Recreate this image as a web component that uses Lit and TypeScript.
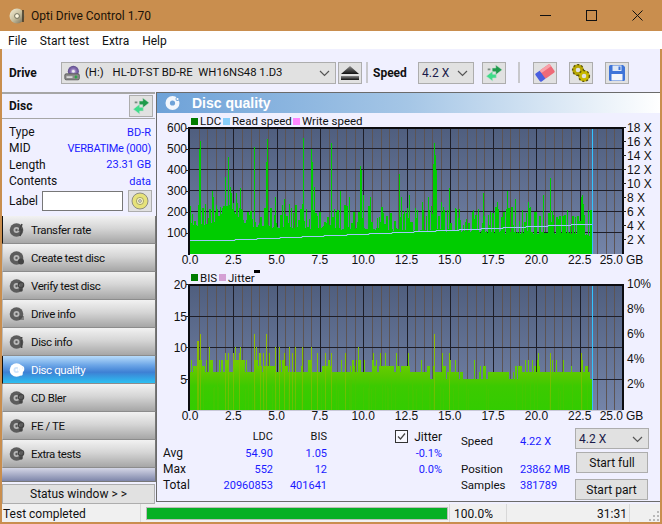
import { LitElement, html, css, svg } from "lit";
import { customElement } from "lit/decorators.js";

function rng(seed: number) {
  return () => {
    seed |= 0; seed = (seed + 0x6d2b79f5) | 0;
    let t = Math.imul(seed ^ (seed >>> 15), 1 | seed);
    t = (t + Math.imul(t ^ (t >>> 7), 61 | t)) ^ t;
    return ((t ^ (t >>> 14)) >>> 0) / 4294967296;
  };
}

const X0 = 33, PLOT_R = 466; // svg-local x (svg starts at page x=157)
const PXGB = (PLOT_R - X0) / 25;

const ldcPeaks: [number, number][] = [[190,230],[199,500],[200,540],[205,240],[212,300],[213,270],[225,365],[228,460],[230,320],[231,290],[236,290],[240,315],[254,510],[266,440],[267,550],[275,270],[284,260],[289,240],[303,552],[311,500],[312,440],[314,320],[331,530],[340,300],[349,270],[360,420],[361,400],[363,280],[370,270],[399,380],[401,270],[409,280],[407,220],[415,220],[417,210],[422,250],[428,270],[431,230],[433,430],[434,528],[435,470],[436,400],[441,250],[444,210],[447,210],[449,314],[455,220],[459,215],[473,210],[483,290],[490,200],[497,250],[507,300],[515,260],[522,210],[528,250],[543,280],[550,360],[567,210],[581,270],[582,280],[583,240],[588,210],[590,210]];
const bisPeaks: [number, number][] = [[197,11],[198,11],[200,12],[225,9],[228,9],[233,9],[239,9],[254,12],[260,9],[263,9],[266,12],[275,10],[279,10],[284,9],[289,10],[292,9],[295,10],[302,10],[311,10],[317,9],[325,9],[331,9],[345,9],[360,8],[434,12],[449,9],[474,8],[528,8],[550,9],[581,9],[582,8]];

function ldcPath() {
  const r = rng(11);
  const peaks = new Map(ldcPeaks);
  let d = "";
  let carry = 0, carryLeft = 0;
  for (let px = 190; px < 593; px++) {
    const t = (px - 190) / 403;
    let v = 140 - 46 * t + r() * 14 - 7;
    if (carryLeft > 0) { v = carry; carryLeft--; }
    else if (r() < 0.58 - 0.18 * t) {
      v = 140 + r() * (110 - 30 * t);
      carry = v; carryLeft = r() < 0.5 ? 1 : 0;
    }
    v += 90 * Math.exp(-(((px - 228) / 11) ** 2));
    if (peaks.has(px)) v = peaks.get(px)!;
    const y = 141 - v * 0.21;
    d += `M${px - 157} ${y.toFixed(1)}h1V141h-1z`;
  }
  return d;
}

function bisPaths() {
  const r = rng(5);
  const peaks = new Map(bisPeaks);
  let d = "", o = "", s = "";
  let cur = 6;
  for (let px = 190; px < 593; px++) {
    const t = (px - 190) / 403;
    if (r() < 0.32) {
      const q = r();
      cur = t < 0.5 ? (q < 0.45 ? 6 : q < 0.8 ? 7 : 8) : (q < 0.2 ? 5 : q < 0.75 ? 6 : 7);
    }
    let v = cur;
    if (r() < 0.09) v = cur + 2;
    const p = peaks.get(px);
    if (p) v = p;
    const y = 140 - v * 6.3;
    const seg = `M${px - 157} ${y.toFixed(1)}h1V140h-1z`;
    if (p && p >= 9) o += seg; else d += seg;
    if (r() < 0.18) s += `M${px - 157} ${(140 - (3 + r() * 2) * 6.3).toFixed(1)}h1V140h-1z`;
  }
  return { d, o, s };
}
const LDC = ldcPath();
const BIS = bisPaths();
const SPEED = (() => {
  let d = "M33 127.5";
  const steps = 18;
  for (let i = 1; i <= steps; i++) {
    const x = 33 + (403 * i) / steps;
    const y = 127.5 - i * (17 / steps);
    d += `H${x.toFixed(0)}V${(Math.round(y) + 0.5).toFixed(1)}`;
  }
  return d;
})();

function disc(active = false, glyph = "") {
  const c = active ? "#fff" : "#5c5c5c";
  const c2 = active ? "#cfe4fb" : "#b8b8b8";
  const g = active ? "#fff" : "#444";
  return svg`<svg class="bi" width="17" height="16" viewBox="0 0 17 16">
    <circle cx="7.5" cy="8" r="6.8" fill=${c}/>
    <circle cx="7.5" cy="8" r="3" fill=${c2}/>
    <circle cx="7.5" cy="8" r="1.2" fill=${c}/>
    ${glyph === "bolt" ? svg`<path d="M13 2 L10.5 8 L13 7.5 L11 14" fill="none" stroke=${g} stroke-width="1.6"/>` : ""}
    ${glyph === "dot" ? svg`<circle cx="12" cy="11.5" r="3" fill=${g}/>` : ""}
    ${glyph === "ring" ? svg`<circle cx="12" cy="7" r="2.6" fill="none" stroke=${g} stroke-width="1.4"/><circle cx="12" cy="12" r="1.8" fill=${g}/>` : ""}
    ${glyph === "lines" ? svg`<path d="M10 11h5M10 13h5" stroke=${g} stroke-width="1.2"/>` : ""}
    ${glyph === "i" ? svg`<path d="M12.5 3v1.6M12.5 6v8" stroke=${g} stroke-width="1.8"/>` : ""}
  </svg>`;
}

function refresh(size = 20) {
  return svg`<svg width=${size} height=${size} viewBox="0 0 20 20">
    <path d="M8 4.5H12V1L19 6.5L12 12V8.500H8Z" fill="#1f9a4c" stroke="#c4dccc" stroke-width=".6"/>
    <path d="M12.500 15.500H8.500V19L1.500 13.500L8.500 8V11.500H12.500Z" fill="#3fdc8a" stroke="#c4dccc" stroke-width=".6"/>
    <rect x="3" y="5" width="3" height="2" fill="#7a8a80"/>
  </svg>`;
}

function chevron() {
  return svg`<svg class="chev" width="11" height="7" viewBox="0 0 11 7"><path d="M1 1 L5.5 5.5 L10 1" fill="none" stroke="#555" stroke-width="1.2"/></svg>`;
}

@customElement("app-root")
export class AppRoot extends LitElement {
  static styles = css`
    :host { display: block; width: 662px; height: 524px; overflow: hidden; font: 12px Roboto, "Noto Sans", sans-serif; color: #111; }
    * { box-sizing: border-box; }
    .win { height: 524px; background: #c98e4e; padding: 0 2px 2px; display: flex; flex-direction: column; }
    .title { height: 31px; display: flex; align-items: center; margin: 0 -2px; padding: 0 2px 0 9px; flex: none; }
    .title .t { margin-left: 4px; font-size: 12px; color: #1a1208; }
    .wc { margin-left: auto; display: flex; }
    .wc span { width: 46px; height: 31px; display: flex; align-items: center; justify-content: center; }
    .menu { height: 18px; background: #fff; display: flex; gap: 13px; align-items: center; flex: none; font-size: 12px; margin: 0 -2px; padding: 1px 0 0 8px; }
    .toolbar { height: 43px; background: #f0f0ff; flex: none; display: flex; align-items: center; padding: 4px 0 0 7px; }
    .toolbar b { font-weight: 700; font-size: 12px; flex: none; }
    .b1 { width: 25px; }
    .b2 { width: 32px; margin-left: 5px; }
    .combo { height: 22px; background: #e1e1e1; border: 1px solid #adadad; display: flex; align-items: center; position: relative; padding-left: 3px; color: #1a1a4a; }
    .combo .chev { position: absolute; right: 5px; top: 7px; }
    .drive { width: 275px; margin-left: 27px; gap: 4px; color: #111; font-size: 11.3px; padding-left: 2px; }
    .dv { margin-left: 5px; }
    .speedc { width: 56px; margin-left: 13px; }
    .tb { width: 24px; height: 22px; background: #e1e1e1; border: 1px solid #adadad; display: flex; align-items: center; justify-content: center; flex: none; }
    .ej { margin-left: 2px; }
    .m8 { margin-left: 8px; }
    .m12 { margin-left: 12px; }
    .m13 { margin-left: 13px; }
    .m4 { margin-left: 4px; }
    .sep { width: 2px; height: 21px; background: #c8c8cc; flex: none; }
    .main { height: 412px; flex: none; display: flex; background: #f0f0ff; }
    .side { width: 154px; flex: none; display: flex; flex-direction: column; }
    .dischead { height: 27px; border-top: 2px solid #a6a6a6; border-bottom: 1px solid #a6a6a6; display: flex; align-items: center; justify-content: space-between; padding: 0 2px 0 7px; margin-right: 1px; }
    .dischead b { font-size: 12px; }
    .info { height: 97px; padding: 5px 5px 0 7px; }
    .info .r { height: 16.3px; display: flex; justify-content: space-between; align-items: center; }
    .blue { color: #1a1aff; font-size: 11px; }
    .mid { letter-spacing: -.25px; }
    .lab { display: flex; align-items: center; height: 22px; margin-top: 1px; }
    .lab span { width: 33px; flex: none; }
    .lab input { width: 81px; height: 20px; border: 1px solid #777; background: #fff; padding: 0; flex: none; }
    .lab .tb { margin-left: 5px; height: 22px; }
    .btn { height: 28px; flex: none; display: flex; align-items: center; gap: 5px; padding-left: 6px; background: linear-gradient(#f2f2f2, #d6d6d6 45%, #a6a6a6); border-bottom: 1px solid #8c8c8c; border-right: 1px solid #777; border-left: 1px solid #bbb; font-size: 11.5px; letter-spacing: -.4px; color: #111; }
    .btn.first { border-left: 1px solid #111; }
    .btn.on { background: linear-gradient(#b8dcfb, #6aa4e6 35%, #3e80d4 60%, #2cc0f2); color: #fff; border-left: 1px solid #111; }
    .strip { height: 14px; flex: none; background: linear-gradient(#d4d6e6, #7e86aa); border-right: 1px solid #777; border-bottom: 1px solid #777; }
    .status-btn { height: 20px; flex: none; margin: 2px 1px 0 0; background: #e1e1e1; border: 1px solid #adadad; display: flex; align-items: center; justify-content: center; }
    .panel { width: 504px; flex: none; height: 410px; border: 1px solid #6b6b6b; border-width: 1px 0 1px 1px; display: flex; flex-direction: column; }
    .phead { height: 20px; flex: none; background: linear-gradient(90deg, #6ea2d8, #a5c6e6 50%, #ffffff); display: flex; align-items: center; padding-left: 8px; gap: 11px; color: #fff; font-weight: 700; font-size: 14px; font-family: "Liberation Sans", sans-serif; }
    .ch { display: block; flex: none; }
    .ax { font: 12px "Liberation Sans", sans-serif; fill: #111; }
    .lg { font: 11.5px Roboto, sans-serif; fill: #111; }
    .stats { flex: none; height: 73px; display: flex; font-size: 12px; }
    .sgrid { display: grid; grid-template-columns: 40px 70px 54px 68px 47px; grid-template-rows: 17px 16px 16px 16px; margin-left: 6px; align-items: center; height: 65px; flex: none; }
    .sgrid .v { text-align: right; font-size: 11px; }
    .chk { display: flex; align-items: center; justify-content: space-between; white-space: nowrap; }
    .chk i { width: 13px; height: 13px; border: 1px solid #333; display: flex; background: #f8f8ff; }
    .sright { margin-left: 19px; width: 114px; flex: none; display: grid; grid-template-columns: 59px 55px; grid-template-rows: 16px 12px 16px 16px; padding-top: 5px; align-items: center; align-content: start; white-space: nowrap; font-size: 11.5px; }
    .sright .gap { grid-column: 1 / 3; }
    .sbtns { display: flex; flex-direction: column; width: 75px; flex: none; }
    .sbtns .combo { height: 21px; width: 74px; }
    .pb { background: #e1e1e1; border: 1px solid #adadad; display: flex; align-items: center; justify-content: center; height: 21px; }
    .pb.a { width: 72px; margin: 3px 0 0 1px; }
    .pb.b { width: 73px; margin-top: 6px; }
    .status { height: 18px; flex: none; background: #f0f0f0; display: flex; align-items: center; }
    .status .s1 { width: 139px; padding: 2px 0 0 1px; border-right: 1px solid #d8d8d8; height: 100%; display: flex; align-items: center; }
    .prog { width: 302px; height: 13px; margin-left: 5px; margin-top: 1px; background: #06b025; border: 1px solid #bcbcbc; flex: none; }
    .s3 { width: 58px; margin-left: 1px; height: 100%; padding: 2px 0 0 4px; border-left: 1px solid #d8d8d8; border-right: 1px solid #d8d8d8; display: flex; align-items: center; flex: none; }
    .s4 { flex: 1; height: 100%; display: flex; align-items: center; justify-content: flex-end; padding: 2px 2px 0 0; border-right: 1px solid #d8d8d8; }
    .grip { flex: none; width: 30px; height: 100%; display: flex; align-items: flex-end; justify-content: flex-end; }
  `;

  private plot(top: number, h: number, hRows: number, hH: number, id: string) {
    const vlines = [];
    for (let i = 1; i < 50; i++) {
      const x = Math.round(X0 + (i * PXGB) / 2) + 0.5;
      vlines.push(svg`<path d="M${x} ${top}V${top + h}" stroke=${i % 5 === 0 ? "#1e1e28" : "#5c5454"}/>`);
    }
    const hl = [];
    for (let i = 1; i < hRows; i++) {
      const y = Math.round(top + hH * i) + 0.5;
      hl.push(svg`<path d="M${X0} ${y}H${PLOT_R}" stroke="#1e1e28"/>`);
    }
    return svg`<rect x=${X0} y=${top} width=${PLOT_R - X0} height=${h} fill="url(#${id})"/>${vlines}${hl}`;
  }

  private xlabels(y: number) {
    const out = [];
    for (let i = 0; i < 10; i++) {
      out.push(svg`<text class="ax" x=${X0 + i * 2.5 * PXGB} y=${y} text-anchor="middle">${(i * 2.5).toFixed(1)}</text>`);
    }
    out.push(svg`<text class="ax" x="466" y=${y} text-anchor="end">25.0</text>`);
    out.push(svg`<text class="ax" x="469" y=${y}>GB</text>`);
    return out;
  }

  private chart1() {
    const ly = [[600, 15], [500, 36], [400, 57], [300, 78], [200, 99], [100, 120]] as const;
    const rs = [18, 16, 14, 12, 10, 8, 6, 4, 2];
    return html`<svg class="ch" width="504" height="157" viewBox="0 0 504 157">
      <defs><linearGradient id="bg1" x1="0" y1="0" x2="0" y2="1"><stop offset="0" stop-color="#4f5e7e"/><stop offset="1" stop-color="#7484a8"/></linearGradient></defs>
      <rect x="34" y="5" width="7" height="7" fill="#007c00"/><text class="lg" x="43" y="12">LDC</text>
      <rect x="66" y="5" width="7" height="7" fill="#87cefa"/><text class="lg" x="75" y="12">Read speed</text>
      <rect x="136" y="5" width="7" height="7" fill="#ff88ff"/><text class="lg" x="145" y="12">Write speed</text>
      ${this.plot(14, 127, 6, 21, "bg1")}
      <path d=${LDC} fill="#00cc00" shape-rendering="crispEdges"/>
      <path d=${SPEED} fill="none" stroke="#9cc8f8" stroke-width="1"/>
      <path d="M435.5 15V141" stroke="#33c4ff"/>
      <path d="M33 15H467M32 14V142M466 14V141" stroke="#0c0c10" stroke-width="2" fill="none"/>
      ${ly.map(([v, y]) => svg`<text class="ax" x="30" y=${y + 4} text-anchor="end">${v}</text><path d="M29 ${y + 0.5}h3" stroke="#222"/>`)}
      ${rs.map((v, i) => svg`<text class="ax" x="470" y=${14 + i * 14 + 5}>${v} X</text><path d="M466 ${14 + i * 14 + 0.5}h3" stroke="#222"/>`)}
      ${this.xlabels(151)}
    </svg>`;
  }

  private chart2() {
    const ly = [[20, 14], [15, 46], [10, 77], [5, 109]] as const;
    const rs = ["10%", "8%", "6%", "4%", "2%"];
    return html`<svg class="ch" width="504" height="158" viewBox="0 0 504 158">
      <defs>
        <linearGradient id="bg2" x1="0" y1="0" x2="0" y2="1"><stop offset="0" stop-color="#4f5e7e"/><stop offset="1" stop-color="#7484a8"/></linearGradient>
        <linearGradient id="b1" gradientUnits="userSpaceOnUse" x1="0" y1="140" x2="0" y2="60">
          <stop offset="0" stop-color="#33cc00"/><stop offset=".3" stop-color="#3cca00"/><stop offset=".42" stop-color="#55c800"/><stop offset=".55" stop-color="#66cc00"/><stop offset=".8" stop-color="#88c400"/><stop offset="1" stop-color="#99bb00"/>
        </linearGradient>
        <linearGradient id="b2" gradientUnits="userSpaceOnUse" x1="0" y1="140" x2="0" y2="60">
          <stop offset="0" stop-color="#66c000"/><stop offset=".5" stop-color="#7cc000"/><stop offset="1" stop-color="#99bb00"/>
        </linearGradient>
      </defs>
      <rect x="34" y="4" width="7" height="7" fill="#007c00"/><text class="lg" x="43" y="12">BIS</text>
      <rect x="62" y="4" width="7" height="7" fill="#d4a0d4"/><text class="lg" x="71" y="12">Jitter</text>
      <rect x="97" y="0" width="6" height="3" fill="#000"/>
      ${this.plot(14, 126, 4, 31.5, "bg2")}
      <path d=${BIS.d} fill="url(#b1)" shape-rendering="crispEdges"/>
      <path d=${BIS.s} fill="#50c400" fill-opacity=".45" shape-rendering="crispEdges"/>
      <path d=${BIS.o} fill="url(#b2)" shape-rendering="crispEdges"/>
      <path d="M435.5 14V140" stroke="#33c4ff"/>
      <path d="M33 15H467M32 14V141M466 14V140" stroke="#0c0c10" stroke-width="2" fill="none"/>
      <path d="M33 140.5H465" stroke="#c8c8d8"/>
      ${ly.map(([v, y]) => svg`<text class="ax" x="30" y=${y + 5} text-anchor="end">${v}</text><path d="M29 ${y + 0.5}h3" stroke="#222"/>`)}
      ${rs.map((v, i) => svg`<text class="ax" x="470" y=${14 + i * 25 + 4}>${v}</text>`)}
      ${this.xlabels(150)}
    </svg>`;
  }

  render() {
    const btns: [string, string][] = [["Transfer rate", "bolt"], ["Create test disc", "dot"], ["Verify test disc", "ring"], ["Drive info", "lines"], ["Disc info", "i"], ["Disc quality", "ring"], ["CD Bler", "ring"], ["FE / TE", "ring"], ["Extra tests", "ring"]];
    return html`<div class="win">
      <div class="title">
        <svg width="18" height="18" viewBox="0 0 18 18">
          <defs><linearGradient id="cd" x1="0" y1="0" x2="1" y2="1"><stop offset="0" stop-color="#f6f0d8"/><stop offset=".5" stop-color="#c8c0a0"/><stop offset="1" stop-color="#6c6450"/></linearGradient></defs>
          <circle cx="8" cy="9" r="7.5" fill="url(#cd)"/><circle cx="8" cy="9" r="2.4" fill="#fff8e0" stroke="#554" stroke-width=".8"/>
          <path d="M14 3v12" stroke="#443a28" stroke-width="1.6"/>
        </svg>
        <span class="t">Opti Drive Control 1.70</span>
        <div class="wc">
          <span><svg width="11" height="11"><path d="M0 5.5H11" stroke="#111"/></svg></span>
          <span><svg width="11" height="11"><rect x=".5" y=".5" width="10" height="10" fill="none" stroke="#111"/></svg></span>
          <span><svg width="11" height="11"><path d="M.5 .5L10.5 10.5M10.5 .5L.5 10.5" stroke="#111"/></svg></span>
        </div>
      </div>
      <div class="menu"><span>File</span><span>Start test</span><span>Extra</span><span>Help</span></div>
      <div class="toolbar">
        <b class="b1">Drive</b>
        <div class="combo drive">
          <svg width="17" height="16" viewBox="0 0 20 18">
            <defs><radialGradient id="pd"><stop offset="0" stop-color="#e8e0f4"/><stop offset=".5" stop-color="#8a72b4"/><stop offset="1" stop-color="#5c4a8a"/></radialGradient></defs>
            <circle cx="11" cy="7" r="6.5" fill="url(#pd)"/><circle cx="11" cy="7" r="1.5" fill="#eee"/>
            <rect x="1" y="10" width="17" height="7" rx="1.5" fill="#8c8c8c" stroke="#555"/>
            <rect x="3" y="13" width="7" height="1.6" fill="#eee"/><path d="M14 12v3.4M12.4 13.7h3.4" stroke="#1aa838" stroke-width="1.4"/>
          </svg>
          <span>(H:)</span><span class="dv">HL-DT-ST BD-RE&nbsp; WH16NS48 1.D3</span>${chevron()}
        </div>
        <div class="tb ej">
          <svg width="18" height="14" viewBox="0 0 18 14"><defs><linearGradient id="ej" x1="0" y1="0" x2="0" y2="1"><stop offset="0" stop-color="#888"/><stop offset="1" stop-color="#111"/></linearGradient></defs><path d="M9 0L18 8H0Z" fill="url(#ej)"/><rect x="0" y="10" width="18" height="4" fill="url(#ej)"/></svg>
        </div>
        <div class="sep m4"></div>
        <b class="b2">Speed</b>
        <div class="combo speedc"><span>4.2 X</span>${chevron()}</div>
        <div class="tb m8">${refresh(18)}</div>
        <div class="sep m12"></div>
        <div class="tb m13">
          <svg width="20" height="18" viewBox="0 0 20 18"><g transform="rotate(-35 10 9)"><rect x="1" y="4" width="7" height="10" rx="1.5" fill="#4a5fe0"/><rect x="7" y="4" width="12" height="10" rx="1.5" fill="#ee6a78"/><rect x="7" y="4" width="12" height="3" rx="1" fill="#f8a0a8"/></g></svg>
        </div>
        <div class="tb m12">
          <svg width="20" height="20" viewBox="0 0 20 20"><circle cx="7" cy="7" r="4" fill="none" stroke="#b8a800" stroke-width="3.4"/><circle cx="7" cy="7" r="5.4" fill="none" stroke="#5c5410" stroke-width="1.4" stroke-dasharray="2 2"/><circle cx="13" cy="13" r="4" fill="none" stroke="#c8b800" stroke-width="3.4"/><circle cx="13" cy="13" r="5.4" fill="none" stroke="#5c5410" stroke-width="1.4" stroke-dasharray="2 2"/></svg>
        </div>
        <div class="tb m12">
          <svg width="18" height="18" viewBox="0 0 18 18"><path d="M1 2.5A1.5 1.5 0 0 1 2.5 1H15L17 3V15.5A1.5 1.5 0 0 1 15.5 17H2.5A1.500 1.500 0 0 1 1 15.500Z" fill="#3f74d8"/><rect x="4.500" y="1.500" width="9" height="5.500" fill="#dfe8f6"/><rect x="3.500" y="10" width="11" height="6.500" fill="#f4f6fb"/><rect x="10.500" y="2.500" width="2" height="3.500" fill="#3f74d8"/></svg>
        </div>
      </div>
      <div class="main">
        <div class="side">
          <div class="dischead"><b>Disc</b><div class="tb">${refresh(18)}</div></div>
          <div class="info">
            <div class="r"><span>Type</span><span class="blue">BD-R</span></div>
            <div class="r"><span>MID</span><span class="blue mid">VERBATIMe (000)</span></div>
            <div class="r"><span>Length</span><span class="blue">23.31 GB</span></div>
            <div class="r"><span>Contents</span><span class="blue">data</span></div>
            <div class="lab"><span>Label</span><input />
              <div class="tb"><svg width="18" height="18" viewBox="0 0 18 18"><circle cx="9" cy="9" r="8" fill="#e6e27a" stroke="#777" stroke-width=".8"/><circle cx="9" cy="9" r="3.600" fill="#f4f2c0" stroke="#8a8a50" stroke-width=".7"/><circle cx="9" cy="9" r="1.400" fill="#e1e1e1" stroke="#666" stroke-width=".6"/></svg></div>
            </div>
          </div>
          ${btns.map(([t, g], i) => html`<div class="btn ${i === 0 ? "first" : ""} ${t === "Disc quality" ? "on" : ""}">${disc(t === "Disc quality", g)}<span>${t}</span></div>`)}
          <div class="strip"></div>
          <div class="status-btn">Status window &gt; &gt;</div>
        </div>
        <div class="panel">
          <div class="phead">
            <svg width="16" height="16" viewBox="0 0 16 16"><circle cx="7.500" cy="8" r="7" fill="#f2f6fc"/><circle cx="7.500" cy="8" r="2.600" fill="#6ea2d8"/><circle cx="12.500" cy="4" r="2" fill="#6ea2d8"/><circle cx="12.500" cy="4" r="1.100" fill="#fff"/></svg>
            <span>Disc quality</span>
          </div>
          ${this.chart1()}
          ${this.chart2()}
          <div class="stats">
            <div class="sgrid">
              <span></span><span class="v">LDC</span><span class="v">BIS</span><span></span>
              <div class="chk"><i><svg width="11" height="11" viewBox="0 0 11 11"><path d="M2 5.500L4.500 8L9 2.500" fill="none" stroke="#444" stroke-width="1.200"/></svg></i><span>Jitter</span></div>
              <span>Avg</span><span class="v blue">54.90</span><span class="v blue">1.05</span><span></span><span class="v blue">-0.1%</span>
              <span>Max</span><span class="v blue">552</span><span class="v blue">12</span><span></span><span class="v blue">0.0%</span>
              <span>Total</span><span class="v blue">20960853</span><span class="v blue">401641</span><span></span><span></span>
            </div>
            <div class="sright">
              <span>Speed</span><span class="blue">4.22 X</span>
              <span class="gap"></span>
              <span>Position</span><span class="blue">23862 MB</span>
              <span>Samples</span><span class="blue">381789</span>
            </div>
            <div class="sbtns">
              <div class="combo"><span>4.2 X</span>${chevron()}</div>
              <div class="pb a">Start full</div>
              <div class="pb b">Start part</div>
            </div>
          </div>
        </div>
      </div>
      <div class="status">
        <div class="s1">Test completed</div>
        <div class="prog"></div>
        <div class="s3">100.0%</div>
        <div class="s4">31:31</div>
        <div class="grip"><svg width="12" height="12" viewBox="0 0 12 12" fill="#b8b8b8"><rect x="9" y="9" width="2" height="2"/><rect x="5" y="9" width="2" height="2"/><rect x="1" y="9" width="2" height="2"/><rect x="9" y="5" width="2" height="2"/><rect x="5" y="5" width="2" height="2"/><rect x="9" y="1" width="2" height="2"/></svg></div>
      </div>
    </div>`;
  }
}
